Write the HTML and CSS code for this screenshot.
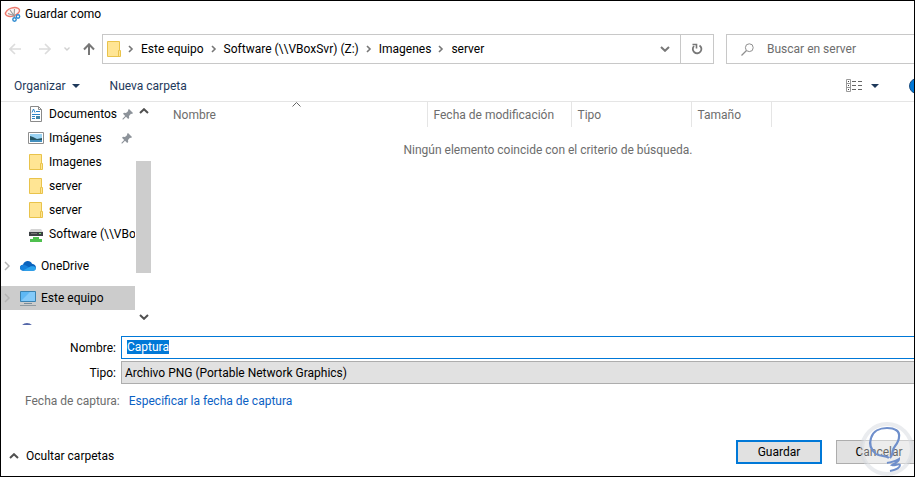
FILE: index.html
```html
<!DOCTYPE html>
<html lang="es">
<head>
    <meta charset="UTF-8">
    <meta name="viewport" content="width=device-width, initial-scale=1.0">
    <title>Guardar como</title>
    <link rel="stylesheet" href="styles.css">
</head>
<body>
    <!-- Shared icons -->
    <svg class="defs" aria-hidden="true">
        <symbol id="folder" viewBox="0 0 14 16">
            <path d="M.5.5h12v9h1v6H.5z" fill="#ffe594" stroke="#e9c34b"/>
            <path d="M11.5 15V9.500h1" fill="none" stroke="#e9c34b"/>
        </symbol>
        <symbol id="crumb" viewBox="0 0 6 8">
            <path d="M1 1l3 3-3 3" fill="none" stroke="#777" stroke-width="1.600"/>
        </symbol>
        <symbol id="pin" viewBox="0 0 12 12">
            <path d="M7 1l4 4-1 1-1-.2L7 8l.2 2-1 1L4 8.800 1.300 11.500H.5v-.8L3.200 8 1 5.800l1-1L4 5l2.200-2L6 2z" fill="#8d939a"/>
        </symbol>
        <symbol id="chev-up" viewBox="0 0 10 6">
            <path d="M1 5l4-3.800L9 5" fill="none" stroke="currentColor" stroke-width="2"/>
        </symbol>
        <symbol id="chev-down" viewBox="0 0 10 6">
            <path d="M1 1l4 3.800L9 1" fill="none" stroke="currentColor" stroke-width="2"/>
        </symbol>
        <symbol id="expand" viewBox="0 0 6 10">
            <path d="M1 1l4 4-4 4" fill="none" stroke="#b4b4b4" stroke-width="1.500"/>
        </symbol>
    </svg>

    <div class="dialog">
        <header class="title-bar">
            <svg width="18" height="16" viewBox="0 0 18 16">
                <ellipse cx="8.500" cy="6" rx="7.300" ry="4" transform="rotate(-18 8.500 6)" fill="#fdf5f3" stroke="#ec7a6e" stroke-width="1.400"/>
                <path d="M6 4l5 7M10.500 3L10 11M4 7.500l7 2.500" stroke="#999" stroke-width="1.100"/>
                <circle cx="10.500" cy="13.500" r="1.700" fill="none" stroke="#2d8ad0" stroke-width="1.400"/>
                <circle cx="14" cy="10.500" r="1.700" fill="none" stroke="#2d8ad0" stroke-width="1.400"/>
            </svg>
            <h1>Guardar como</h1>
        </header>

        <nav class="nav-row">
            <div class="arrows">
                <button class="icon-btn" aria-label="Atrás" disabled>
                    <svg width="12" height="12" viewBox="0 0 12 12"><path d="M12 6H1M6 1L1 6l5 5" fill="none" stroke="#dcdcdc" stroke-width="1.600"/></svg>
                </button>
                <button class="icon-btn" aria-label="Adelante" disabled>
                    <svg width="12" height="12" viewBox="0 0 12 12"><path d="M0 6h11M6 1l5 5-5 5" fill="none" stroke="#dcdcdc" stroke-width="1.600"/></svg>
                </button>
                <button class="icon-btn small" aria-label="Recientes" disabled>
                    <svg width="6" height="4" viewBox="0 0 6 4"><path d="M.5.5L3 3 5.500.5" fill="none" stroke="#d0d0d0" stroke-width="1.400"/></svg>
                </button>
                <button class="icon-btn" aria-label="Subir">
                    <svg width="12" height="12" viewBox="0 0 12 12"><path d="M6 12V1M1 6.500L6 1.300l5 5.200" fill="none" stroke="#777" stroke-width="2"/></svg>
                </button>
            </div>
            <div class="address">
                <svg class="folder" width="14" height="16"><use href="#folder"/></svg>
                <svg width="6" height="8"><use href="#crumb"/></svg>
                <a href="#">Este equipo</a>
                <svg width="6" height="8"><use href="#crumb"/></svg>
                <a href="#">Software (\\VBoxSvr) (Z:)</a>
                <svg width="6" height="8"><use href="#crumb"/></svg>
                <a href="#">Imagenes</a>
                <svg width="6" height="8"><use href="#crumb"/></svg>
                <a href="#">server</a>
                <button class="history" aria-label="Ubicaciones anteriores"><svg width="10" height="6"><use href="#chev-down"/></svg></button>
                <button class="refresh" aria-label="Actualizar">
                    <svg width="12" height="12" viewBox="0 0 12 12"><path d="M8.500 2.400A4.300 4.300 0 1 1 3 3" fill="none" stroke="#777" stroke-width="1.800"/><path d="M1.500 1.500h4v4" fill="none" stroke="#777" stroke-width="1.600"/></svg>
                </button>
            </div>
            <div class="search">
                <svg width="13" height="13" viewBox="0 0 13 13"><circle cx="8.300" cy="4.700" r="3.900" fill="none" stroke="#8f8f8f"/><path d="M5.500 7.500L.5 12.500" stroke="#8f8f8f" stroke-width="1.200"/></svg>
                <input type="search" placeholder="Buscar en server" aria-label="Buscar en server">
            </div>
        </nav>

        <div class="toolbar">
            <button>Organizar <span class="caret"></span></button>
            <button>Nueva carpeta</button>
            <button class="view" aria-label="Cambiar la vista">
                <svg width="17" height="13" viewBox="0 0 17 13">
                    <path d="M.5.500h4v12h-4zM.5 4.500h4M.5 8.500h4" fill="none" stroke="#999"/>
                    <path d="M2 2.500h1M2 6.500h1M2 10.500h1" stroke="#444"/>
                    <path d="M6 2.500h4M12 2.500h4M6 6.500h4M12 6.500h4M6 10.500h4M12 10.500h4" stroke="#666"/>
                </svg>
                <span class="caret"></span>
            </button>
            <button class="help" aria-label="Ayuda"></button>
        </div>

        <div class="browser">
            <aside class="sidebar">
                <ul>
                    <li>
                        <svg width="16" height="16" viewBox="0 0 16 16"><path d="M2.500.5h8l3 3v12h-11z" fill="#fff" stroke="#8a8a8a"/><path d="M10.500.5v3h3" fill="none" stroke="#8a8a8a"/><path d="M4 6.500L5.500 3 7 6.500M8 5.500h4M4 8.500h8M4 10.500h3M4 12.500h3" stroke="#2d86c9" fill="none"/><path d="M8 10h4v3H8z" fill="#4285a5"/></svg>
                        <span>Documentos</span><svg class="pin" width="12" height="12"><use href="#pin"/></svg>
                    </li>
                    <li>
                        <svg width="16" height="16" viewBox="0 0 16 16"><path d="M.5 2.500h15v11H.5z" fill="#fff" stroke="#8e8e8e"/><path d="M2 4h12v8H2z" fill="#9bd3f3"/><path d="M2 6l3 1 4 2 5-1v2H2z" fill="#265563"/><path d="M2 10h12v2H2z" fill="#438fbd"/></svg>
                        <span>Imágenes</span><svg class="pin" width="12" height="12"><use href="#pin"/></svg>
                    </li>
                    <li><svg class="folder" width="14" height="16"><use href="#folder"/></svg><span>Imagenes</span></li>
                    <li><svg class="folder" width="14" height="16"><use href="#folder"/></svg><span>server</span></li>
                    <li><svg class="folder" width="14" height="16"><use href="#folder"/></svg><span>server</span></li>
                    <li>
                        <svg width="16" height="16" viewBox="0 0 16 16"><path d="M3 3h10l2 3H1z" fill="#d4d4d4"/><path d="M1 6h14v4H1z" fill="#3c4043"/><path d="M3 7h6v1H3z" fill="#777"/><path d="M11 7h2v1h-2z" fill="#73df72"/><path d="M5 11h6v2h3v3H2v-3h3z" fill="#4fc04f"/></svg>
                        <span>Software (\\VBoxSvr)</span>
                    </li>
                    <li class="root">
                        <svg class="expand" width="6" height="10"><use href="#expand"/></svg>
                        <svg width="16" height="16" viewBox="0 0 16 16"><path d="M4 12.800C1.500 12.800 0 11.500 0 9.700 0 8 1.200 6.900 3 6.700 3.800 4.300 5.500 3 7.800 3c2 0 3.500 1 4.200 2.800 2.400.3 4 1.800 4 3.800s-1.400 3.200-3.300 3.200z" fill="#0a63bd"/><path d="M0 9.700C0 8 1.200 6.700 3.200 6.700c1 0 2 .3 2.800.9l5 3-7 2.200c-2.500 0-4-1.300-4-3.100z" fill="#1681dc"/><path d="M3 12.600L10 8.700c1-.8 5.800-.7 6 1.500 0 1.600-1.400 2.600-3.300 2.600H4z" fill="#2ba4ee"/></svg>
                        <span>OneDrive</span>
                    </li>
                    <li class="root selected">
                        <svg class="expand" width="6" height="10"><use href="#expand"/></svg>
                        <svg width="16" height="16" viewBox="0 0 16 16"><path d="M.5 1.500h15v10H.5z" fill="#5eb8f5" stroke="#3b82b0"/><path d="M1 11l9-9h5v9z" fill="#83cafa"/><path d="M4 13.500h8" stroke="#778d9b"/><path d="M0 15.500h16" stroke="#8f9aa1"/></svg>
                        <span>Este equipo</span>
                    </li>
                    <li class="root" aria-label="Red">
                        <svg class="expand" width="6" height="10"></svg>
                        <svg width="16" height="16" viewBox="0 0 16 16"><circle cx="7" cy="8" r="7" fill="#5366a8"/></svg>
                    </li>
                </ul>
            </aside>
            <div class="scrollbar">
                <svg width="10" height="6"><use href="#chev-up"/></svg>
                <div class="thumb"></div>
                <svg width="10" height="6"><use href="#chev-down"/></svg>
            </div>
            <main class="files">
                <table>
                    <thead>
                        <tr>
                            <th class="col-name">Nombre
                                <svg class="sort" width="9" height="5" viewBox="0 0 9 5"><path d="M.5 4.500l4-4 4 4" fill="none" stroke="#666"/></svg>
                            </th>
                            <th class="col-date">Fecha de modificación</th>
                            <th class="col-type">Tipo</th>
                            <th class="col-size">Tamaño</th>
                            <th class="col-rest"></th>
                        </tr>
                    </thead>
                    <tbody>
                        <tr><td colspan="5">Ningún elemento coincide con el criterio de búsqueda.</td></tr>
                    </tbody>
                </table>
            </main>
        </div>

        <form class="save-form">
            <div class="field">
                <label for="file-name">Nombre:</label>
                <input id="file-name" type="text" value="Captura" autocomplete="off" spellcheck="false">
            </div>
            <div class="field">
                <label for="file-type">Tipo:</label>
                <select id="file-type"><option>Archivo PNG (Portable Network Graphics)</option></select>
            </div>
            <div class="meta"><span>Fecha de captura:</span><a href="#">Especificar la fecha de captura</a></div>
            <footer class="actions">
                <button type="button" class="hide-folders"><svg width="10" height="6"><use href="#chev-up"/></svg>Ocultar carpetas</button>
                <button type="submit" class="btn btn-primary">Guardar</button>
                <button type="button" class="btn btn-cancel">Cancelar</button>
            </footer>
        </form>

        <svg class="watermark" width="54" height="54" viewBox="0 0 54 54" aria-hidden="true">
            <circle cx="27" cy="27" r="25" fill="#fff" fill-opacity=".4" stroke="#d5dae0" stroke-opacity=".5" stroke-width="4"/>
            <path d="M16 32C11 28 9 22 11 16c2-7 9-10 16-10 8 0 13 3 12 9 0 6-5 9-6 13-1 3 0 5-3 8" fill="none" stroke="#6f8fcb" stroke-width="2.200"/>
            <path d="M16 32c4 3 10 1 13 4M27 41c4-1 8-1 12-4 0 3-4 4-7 6 3 1 7-2 8 0 0 3-5 5-10 6" fill="none" stroke="#6f8fcb" stroke-width="2"/>
        </svg>
    </div>

    <script>
        var fileName = document.getElementById('file-name');
        fileName.focus();
        fileName.select();
    </script>
</body>
</html>
```

FILE: styles.css
```css
* {
    box-sizing: border-box;
}
body {
    margin: 0;
    font-family: Roboto, "Open Sans", sans-serif;
    font-size: 12px;
    line-height: 16px;
    color: #000;
    background: #fff;
}
button, input, select {
    font: inherit;
    color: inherit;
    margin: 0;
    padding: 0;
    border: none;
    background: none;
}
a {
    color: inherit;
    text-decoration: none;
}
svg {
    display: block;
    flex-shrink: 0;
}
.defs {
    position: absolute;
    width: 0;
    height: 0;
}
.dialog {
    position: relative;
    display: flex;
    flex-direction: column;
    min-height: 100vh;
    border: 1px solid #000;
    overflow: hidden;
}

/* Title and navigation */
.title-bar {
    display: flex;
    align-items: center;
    gap: 3px;
    height: 25px;
    padding-left: 3px;
}
.title-bar h1 {
    margin: 0;
    font-size: 12px;
    font-weight: normal;
}
.nav-row {
    display: flex;
    height: 30px;
    margin-top: 8px;
}
.arrows {
    display: flex;
    align-items: center;
    width: 101px;
    padding-left: 8px;
    gap: 18px;
}
.icon-btn.small {
    margin: 0 -5px;
}
.address {
    flex: 1;
    display: flex;
    align-items: center;
    border: 1px solid #c8c8c8;
    padding-left: 4px;
    gap: 7px;
    white-space: nowrap;
}
.history {
    margin-left: auto;
    padding: 0 3px;
    color: #777;
}
.refresh {
    display: flex;
    align-items: center;
    justify-content: center;
    align-self: stretch;
    width: 33px;
    border-left: 1px solid #c8c8c8;
}
.search {
    display: flex;
    align-items: center;
    gap: 13px;
    width: 188px;
    margin-left: 12px;
    padding-left: 14px;
    border: 1px solid #c8c8c8;
    border-right: none;
}
.search input {
    flex: 1;
    min-width: 0;
    outline: none;
}
.search input::placeholder {
    color: #6d6d6d;
    opacity: 1;
}

/* Toolbar */
.toolbar {
    display: flex;
    align-items: center;
    gap: 30px;
    height: 37px;
    padding-left: 13px;
    padding-top: 7px;
    padding-bottom: 1px;
    color: #1e395b;
    overflow: hidden;
}
.toolbar button {
    display: flex;
    align-items: center;
    gap: 6px;
}
.caret {
    border: 4px solid transparent;
    border-top-color: #1e395b;
    border-bottom: none;
}
.toolbar .view {
    margin-left: auto;
    gap: 8px;
}
.toolbar .help {
    width: 16px;
    height: 16px;
    margin-right: -11px;
    flex-shrink: 0;
    border: 1px solid #1c4e80;
    border-radius: 50%;
    background: #0078d7;
}

/* Folder tree and file list */
.browser {
    display: flex;
    height: 224px;
    border-top: 1px solid #e5e5e5;
}
.sidebar {
    width: 134px;
    overflow: hidden;
}
.sidebar ul {
    margin: 0;
    padding: 0;
    list-style: none;
}
.sidebar li {
    display: flex;
    align-items: center;
    gap: 5px;
    height: 24px;
    padding-left: 27px;
    white-space: nowrap;
}
.sidebar .folder {
    margin: 0 1px;
}
.sidebar .root {
    margin-top: 8px;
    padding-left: 3px;
}
.sidebar .expand {
    margin-right: 5px;
}
.sidebar .selected {
    background: #ccc;
}
.sidebar .pin {
    margin-left: auto;
    margin-right: 2px;
}
.scrollbar {
    display: flex;
    flex-direction: column;
    align-items: center;
    justify-content: space-between;
    width: 17px;
    padding: 6px 0 5px;
    color: #505050;
}
.thumb {
    width: 15px;
    height: 112px;
    margin-top: 6px;
    background: #cdcdcd;
}
.files {
    flex: 1;
    min-width: 0;
}
.files table {
    width: 100%;
    table-layout: fixed;
    border-collapse: collapse;
    color: #6d6d6d;
}
.files th {
    position: relative;
    height: 25px;
    padding: 0 0 0 6px;
    border-right: 1px solid #e5e5e5;
    font-weight: normal;
    text-align: left;
    white-space: nowrap;
}
.files .col-name {
    width: 275px;
    padding-left: 21px;
}
.col-date {
    width: 144px;
}
.col-type {
    width: 120px;
}
.col-size {
    width: 80px;
}
.files .col-rest {
    border-right: none;
}
.sort {
    position: absolute;
    top: 0;
    left: 51%;
}
.files td {
    padding: 15px 0 0 30px;
    text-align: center;
}

/* File name, type and actions */
.save-form {
    display: flex;
    flex-direction: column;
    flex: 1;
    padding-top: 11px;
}
.field {
    display: flex;
    align-items: center;
    gap: 5px;
    margin-bottom: 2px;
}
.field label {
    width: 115px;
    text-align: right;
}
.field input,
.field select {
    flex: 1;
    min-width: 0;
    height: 23px;
    border: 1px solid #adadad;
    border-right: none;
    border-radius: 0;
}
.field input {
    padding: 0 5px 2px;
    border-color: #0078d7;
    outline: none;
}
.field input::selection {
    background: #0078d7;
    color: #fff;
}
.field select {
    appearance: none;
    padding-left: 3px;
    background: #e1e1e1;
}
.meta {
    display: flex;
    gap: 9px;
    padding: 7px 0 0 24px;
    color: #6d6d6d;
}
.meta a {
    color: #0b61c4;
}
.actions {
    display: flex;
    align-items: flex-end;
    gap: 14px;
    margin-top: auto;
    padding: 0 0 12px 8px;
}
.hide-folders {
    display: flex;
    align-items: center;
    gap: 7px;
    margin-right: auto;
}
.hide-folders svg {
    color: #505050;
}
.btn {
    width: 86px;
    height: 24px;
    border: 1px solid #adadad;
    background: #e1e1e1;
}
.btn-primary {
    border: 2px solid #0078d7;
}
.btn-cancel {
    margin-right: -8px;
}
.watermark {
    position: absolute;
    right: 0;
    bottom: 0;
}
```
